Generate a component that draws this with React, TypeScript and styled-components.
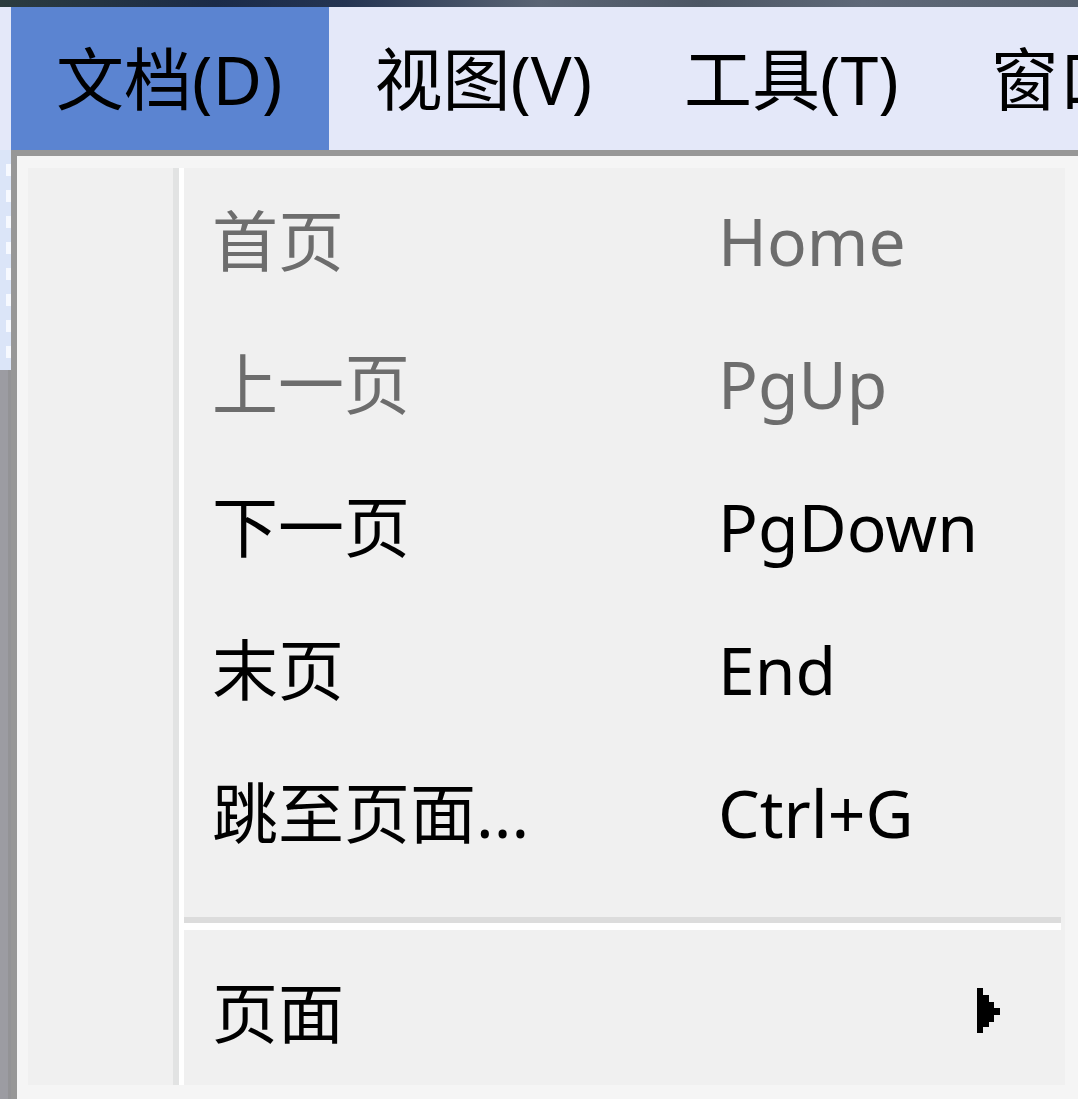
import React from "react";
import styled, { createGlobalStyle } from "styled-components";

const Global = createGlobalStyle`
  html, body { margin: 0; padding: 0; background: #f5f5f5; }
  body { font-family: "Noto Sans", "Noto Sans CJK SC", sans-serif; }
`;

const Screen = styled.div`
  width: 1078px;
  height: 1099px;
  overflow: hidden;
  display: flex;
  flex-direction: column;
  background: #f5f5f5;
  font-family: "Noto Sans", "Noto Sans CJK SC", sans-serif;
`;

const TitleEdge = styled.div`
  height: 7px;
  flex: none;
  background: linear-gradient(90deg, #2c3c3e 0%, #1b2b48 20%, #243452 32%, #5a6474 50%, #4c5664 65%, #5e6878 80%, #56606e 100%);
`;

const MenuBar = styled.div`
  height: 143px;
  flex: none;
  display: flex;
  align-items: stretch;
  padding-left: 11px;
  background: #e4e8f9;
  white-space: nowrap;
  overflow: hidden;
`;

const BarItem = styled.div<{ $active?: boolean }>`
  display: flex;
  align-items: center;
  padding: 0 47px 0 45px;
  font-size: 68px;
  line-height: 1;
  color: #000;
  flex: none;
  background: ${(p) => (p.$active ? "#5b84d1" : "transparent")};
`;

const Body = styled.div`
  flex: 1;
  display: flex;
  min-height: 0;
`;

const LeftStrip = styled.div`
  width: 11px;
  flex: none;
  display: flex;
  flex-direction: column;
`;

const BackWindow = styled.div`
  height: 220px;
  flex: none;
  background: repeating-linear-gradient(180deg, #dbe5f8 0px, #dbe5f8 14px, #f6f9ff 14px, #f6f9ff 26px);
  background-size: 5px 100%;
  background-repeat: no-repeat;
  background-position: right top;
  background-color: #dbe5f8;
`;

const BackGray = styled.div`
  flex: 1;
  background: linear-gradient(90deg, #9c9ca2 0px, #9c9ca2 8px, #939396 8px);
`;

const Dropdown = styled.div`
  flex: 1;
  display: flex;
  border-left: 6px solid #979797;
  border-top: 6px solid #979797;
  background: #f5f5f5;
  padding: 12px 13px 14px 11px;
  min-width: 0;
`;

const MenuPanel = styled.div`
  flex: 1;
  display: flex;
  background: #f0f0f0;
`;

const Gutter = styled.div`
  width: 145px;
  flex: none;
  border-right: 6px solid #e2e3e3;
`;

const ItemList = styled.div`
  flex: 1;
  display: flex;
  flex-direction: column;
  border-left: 5px solid #ffffff;
  padding-right: 4px;
`;

const Row = styled.div<{ $disabled?: boolean }>`
  height: 143px;
  flex: none;
  display: flex;
  align-items: center;
  padding-left: 28px;
  font-size: 66px;
  line-height: 1;
  color: ${(p) => (p.$disabled ? "#6d6d6d" : "#000")};
  position: relative;
`;

const Label = styled.span`
  width: 506px;
  flex: none;
`;

const Shortcut = styled.span`
  flex: none;
`;

const SeparatorBlock = styled.div`
  height: 57px;
  flex: none;
  display: flex;
  flex-direction: column;
  padding-top: 34px;
  box-sizing: border-box;
`;

const SepLine = styled.div`
  height: 6px;
  background: #dcdcdc;
  border-bottom: 7px solid #ffffff;
`;

const ArrowWrap = styled.span`
  position: absolute;
  left: 793px;
  top: 48px;
  width: 23px;
  height: 45px;
  display: block;
  line-height: 0;

  svg {
    display: block;
  }
`;

const SubArrow = () => (
  <ArrowWrap>
    <svg width="23" height="45" viewBox="0 0 23 45">
      <path d="M0 0H6V7H12V14H17V20H23V27H17V34H12V39H6V45H0Z" fill="#000" />
    </svg>
  </ArrowWrap>
);

const items = [
  { label: "首页", key: "Home", disabled: true },
  { label: "上一页", key: "PgUp", disabled: true },
  { label: "下一页", key: "PgDown" },
  { label: "末页", key: "End" },
  { label: "跳至页面...", key: "Ctrl+G" },
];

export default function App() {
  return (
    <Screen>
      <Global />
      <TitleEdge />
      <MenuBar>
        <BarItem $active>文档(D)</BarItem>
        <BarItem>视图(V)</BarItem>
        <BarItem>工具(T)</BarItem>
        <BarItem>窗口(W)</BarItem>
      </MenuBar>
      <Body>
        <LeftStrip>
          <BackWindow />
          <BackGray />
        </LeftStrip>
        <Dropdown>
          <MenuPanel>
            <Gutter />
            <ItemList>
              {items.map((it) => (
                <Row key={it.label} $disabled={it.disabled}>
                  <Label>{it.label}</Label>
                  <Shortcut>{it.key}</Shortcut>
                </Row>
              ))}
              <SeparatorBlock>
                <SepLine />
              </SeparatorBlock>
              <Row>
                <Label>页面</Label>
                <SubArrow />
              </Row>
            </ItemList>
          </MenuPanel>
        </Dropdown>
      </Body>
    </Screen>
  );
}
